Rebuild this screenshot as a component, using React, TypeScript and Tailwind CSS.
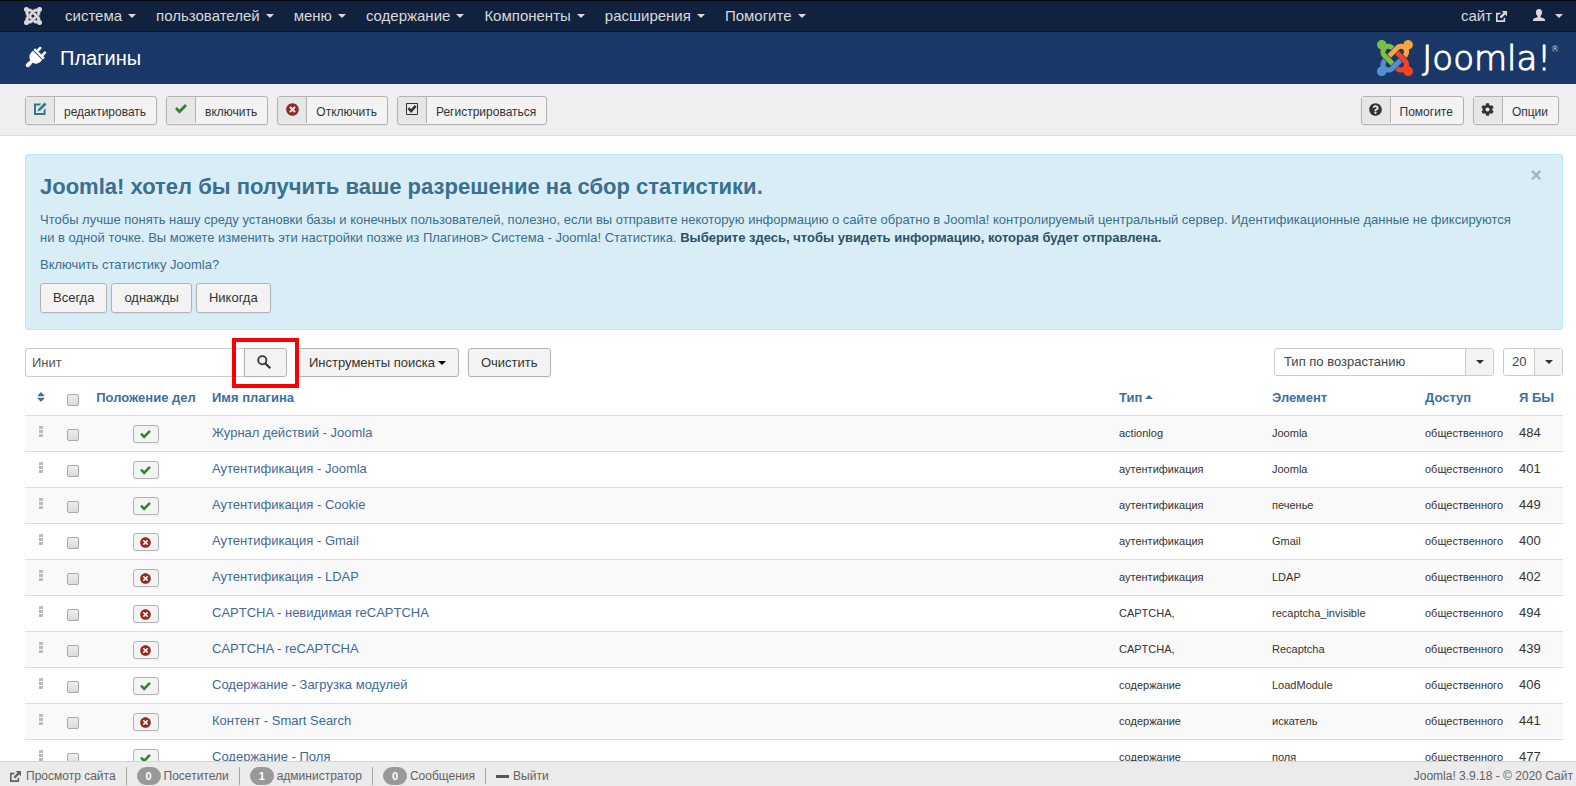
import { useState } from 'react';
import clsx from 'clsx';
import { ImJoomla } from 'react-icons/im';
import { FaCog, FaQuestionCircle, FaSort, FaTimesCircle } from 'react-icons/fa';

interface Plugin {
  id: number;
  name: string;
  type: string;
  element: string;
  enabled: boolean;
}

const menuItems = [
  'система',
  'пользователей',
  'меню',
  'содержание',
  'Компоненты',
  'расширения',
  'Помогите',
];

const plugins: Plugin[] = [
  { id: 484, name: 'Журнал действий - Joomla', type: 'actionlog', element: 'Joomla', enabled: true },
  { id: 401, name: 'Аутентификация - Joomla', type: 'аутентификация', element: 'Joomla', enabled: true },
  { id: 449, name: 'Аутентификация - Cookie', type: 'аутентификация', element: 'печенье', enabled: true },
  { id: 400, name: 'Аутентификация - Gmail', type: 'аутентификация', element: 'Gmail', enabled: false },
  { id: 402, name: 'Аутентификация - LDAP', type: 'аутентификация', element: 'LDAP', enabled: false },
  { id: 494, name: 'CAPTCHA - невидимая reCAPTCHA', type: 'CAPTCHA,', element: 'recaptcha_invisible', enabled: false },
  { id: 439, name: 'CAPTCHA - reCAPTCHA', type: 'CAPTCHA,', element: 'Recaptcha', enabled: false },
  { id: 406, name: 'Содержание - Загрузка модулей', type: 'содержание', element: 'LoadModule', enabled: true },
  { id: 441, name: 'Контент - Smart Search', type: 'содержание', element: 'искатель', enabled: false },
  { id: 477, name: 'Содержание - Поля', type: 'содержание', element: 'поля', enabled: true },
];

const btn =
  'rounded-[3px] border border-[#b3b3b3] bg-[#f3f3f3] text-[#333] shadow-[0_1px_2px_rgba(0,0,0,0.05)]';

const checkbox =
  'block size-3 appearance-none rounded-xs border border-[#a9a9a9] bg-linear-to-b from-[#ececec] to-[#dcdcdc] checked:from-[#3071a9] checked:to-[#3071a9]';

const Caret = ({ className }: { className?: string }) => (
  <span
    className={clsx('inline-block border-x-4 border-t-4 border-x-transparent border-t-current', className)}
  />
);

const CheckIcon = ({ className }: { className?: string }) => (
  <svg viewBox="0 0 12 10" className={clsx('text-[#378137]', className)} fill="currentColor">
    <path d="M0 5l1.9-1.9 2.6 2.5L10 0l2 1.9L4.5 9.8z" />
  </svg>
);

const EditIcon = () => (
  <svg viewBox="0 0 14 14" className="size-3.5 text-[#2f7487]" fill="currentColor">
    <path d="M1 1.5h7.4L6.6 3.4H3v7.6h7.6V8.2L12.5 6.3V13H1z" />
    <path d="M11.6.6L13.5 2.5 7.4 8.6l-2.9 1 1-2.9z" />
  </svg>
);

const CheckinIcon = () => (
  <svg viewBox="0 0 14 14" className="size-3.5" fill="none" stroke="currentColor">
    <path d="M1.5 1.5h11v11h-11z" />
    <path d="M3.4 6.2l2.7 2.9 4.6-5.2" strokeWidth="2.6" />
  </svg>
);

const ExternalIcon = () => (
  <svg viewBox="0 0 12 12" className="size-[11px]" fill="currentColor">
    <path d="M0 2h5.5L4 3.7H1.8v6.5h6.4V8.3l1.8-1.6V12H0z" />
    <path d="M6.2 0H12v5.8l-2-2-4.3 4.3-1.8-1.8L8.2 2z" />
  </svg>
);

const UserIcon = () => (
  <svg viewBox="0 0 12 12" className="mb-0.5 size-3" fill="currentColor">
    <path d="M6 0c2 0 3.1 1.3 3.1 3.3 0 1.6-.7 3-1.6 3.8v1.2c2.4.4 4.5 1.3 4.5 2.6V12H0v-1.1c0-1.3 2.1-2.2 4.5-2.6V7.1c-.9-.8-1.6-2.2-1.6-3.8C2.9 1.3 4 0 6 0z" />
  </svg>
);

const SearchIcon = () => (
  <svg viewBox="0 0 14 14" className="size-3.5" fill="none" stroke="currentColor">
    <circle cx="5.3" cy="5.3" r="4.1" strokeWidth="1.8" />
    <path d="M8.3 8.3l4.9 4.9" strokeWidth="2.2" />
  </svg>
);

const PlugIcon = () => (
  <svg viewBox="0 0 20 20" className="size-5 overflow-visible" fill="currentColor">
    <g transform="rotate(45 10 10)">
      <rect x="5.4" y="-2" width="2.6" height="6" rx="1.2" />
      <rect x="12" y="-2" width="2.6" height="6" rx="1.2" />
      <path d="M3.2 3h13.6v2.4H3.2zM3.4 6.3h13.2v2.2c0 3.4-2 5.7-4.9 6.5v5.6c0 2.2-3.4 2.2-3.4 0V15c-2.9-.8-4.9-3.1-4.9-6.5z" />
      <rect x="8" y="16.2" width="4" height="5.6" rx="1.4" />
    </g>
  </svg>
);

const JoomlaLogo = () => (
  <div className="flex items-center gap-[9px] text-white">
    <svg viewBox="0 32 448 448" className="size-9">
      <path
        fill="#7ac143"
        d="M.6 92.1C.6 58.8 27.4 32 60.4 32c30 0 54.5 21.9 59.2 50.2 32.6-7.6 67.1.6 96.5 30l-44.3 44.3c-20.5-20.5-42.6-16.3-55.4-3.5-14.3 14.3-14.3 37.9 0 52.2l99.5 99.5-44 44.3c-87.7-87.2-49.7-49.7-99.8-99.7-26.8-26.5-35-64.8-24.8-98.9C20.4 144.6.6 120.7.6 92.1z"
      />
      <path
        fill="#f9a541"
        d="M130.1 208.5l44.3 44.3c10-10 89.7-89.7 99.7-99.8 14.3-14.3 37.6-14.3 51.9 0 12.8 12.8 17 35-3.5 55.4l44 44.3c31.2-31.2 38.5-67.6 28.9-101.2 29.2-4.1 51.9-29.2 51.9-59.5 0-33.2-26.8-60.1-59.8-60.1-30.3 0-55.4 22.5-59.5 51.6-33.8-9.9-71.7-1.5-98.3 25.1-18.3 19.1-71.1 71.5-99.6 99.9z"
      />
      <path
        fill="#f44321"
        d="M396.4 360.7c8.2-32.7-.9-68.5-26.3-93.9-11.8-12.2 5 4.7-99.5-99.7l-44.3 44.3 99.7 99.7c14.3 14.3 14.3 37.6 0 51.9-12.8 12.8-35 17-55.4-3.5l-44 44.3c27.6 30.2 68 38.8 102.7 28 5.5 27.4 29.7 48.1 58.9 48.1 33 0 59.8-26.8 59.8-60.1 0-30.2-22.5-55-51.6-59.1z"
      />
      <path
        fill="#5091cd"
        d="M312.1 307.6l-44-44.3c-87 86.4-50.4 50.4-99.7 99.8-14.3 14.3-37.6 14.3-51.9 0-13.1-13.4-16.9-35.3 3.2-55.4l-44-44.3c-30.2 30.2-38 65.2-29.5 98.3-26.7 6-46.2 29.9-46.2 58.2C0 453.2 26.8 480 59.8 480c28.6 0 52.5-19.8 58.6-46.7 32.7 8.2 68.5-.6 94.2-26 32.1-32 12.2-12.4 99.5-99.7z"
      />
    </svg>
    <span className="flex items-start font-['DejaVu_Sans',sans-serif] text-[34px] leading-9 font-extralight">
      <span className="[-webkit-text-stroke:1px_white]">Joomla!</span>
      <span className="text-[8px] leading-5">®</span>
    </span>
  </div>
);

const ToolbarButton = ({ icon, label }: { icon: React.ReactNode; label: string }) => (
  <button type="button" className={clsx(btn, 'flex h-[29px] text-xs')}>
    <span className="flex h-[26px] w-[29px] items-center justify-center border-r border-[#b3b3b3] bg-[#e6e6e6] pb-0.5 text-[13px]">
      {icon}
    </span>
    <span className="pt-px pr-2.5 pl-[9px] leading-[29px]">{label}</span>
  </button>
);

const StatusLink = ({ count, label }: { count: number; label: string }) => (
  <a href="#" className="flex items-center gap-[3px] border-l border-[#a6a6a6] pl-2.5">
    <span className="w-6 rounded-full bg-[#999] text-center text-[11px] leading-[18px] font-bold text-white">
      {count}
    </span>
    {label}
  </a>
);

const App = () => {
  const [search, setSearch] = useState('');
  const [showStats, setShowStats] = useState(true);

  return (
    <div className="flex h-screen flex-col overflow-hidden bg-white font-['Liberation_Sans',Arial,sans-serif] text-[13px] leading-[18px] text-[#333]">
      {/* Top menu */}
      <nav className="flex h-8 shrink-0 items-center border-y border-t-[#02060f] border-b-[#0b1524] bg-[#10223e] pr-[13px] pl-6 text-[15px] text-[#d9d9d9]">
        <a href="#" aria-label="Joomla" className="mr-[23px] text-lg">
          <ImJoomla stroke="currentColor" strokeWidth="0.5" />
        </a>
        <ul className="flex grow gap-5">
          {menuItems.map((item) => (
            <li key={item}>
              <a href="#" className="flex items-center gap-1.5">
                {item}
                <Caret />
              </a>
            </li>
          ))}
        </ul>
        <a href="#" className="flex items-center gap-1">
          сайт
          <ExternalIcon />
        </a>
        <a href="#" aria-label="Профиль" className="ml-[26px] flex items-center gap-2.5">
          <UserIcon />
          <Caret />
        </a>
      </nav>

      <header className="flex h-[52px] shrink-0 items-center justify-between bg-[#1a3867] pr-[17px] pl-[25px]">
        <h1 className="flex items-center gap-[15px] text-xl text-white">
          <PlugIcon />
          Плагины
        </h1>
        <JoomlaLogo />
      </header>

      {/* Toolbar */}
      <div className="flex h-[52px] shrink-0 items-center gap-[9px] border-b border-[#ddd] bg-[#efefef] pt-0.5 pr-[17px] pl-[25px]">
        <ToolbarButton icon={<EditIcon />} label="редактировать" />
        <ToolbarButton icon={<CheckIcon className="h-2.5 w-3" />} label="включить" />
        <ToolbarButton icon={<FaTimesCircle className="text-[#942a25]" />} label="Отключить" />
        <ToolbarButton icon={<CheckinIcon />} label="Регистрироваться" />
        <div className="ml-auto flex gap-[9px]">
          <ToolbarButton icon={<FaQuestionCircle />} label="Помогите" />
          <ToolbarButton icon={<FaCog />} label="Опции" />
        </div>
      </div>

      <main className="min-h-0 grow overflow-hidden pt-[18px] pr-[13px] pl-[25px]">
        {showStats && (
          <section className="relative mb-[18px] rounded-[3px] border border-[#bce8f1] bg-[#d9edf7] pt-3.5 pr-12 pb-4 pl-3.5 text-[#3a6f8f]">
            <button
              type="button"
              aria-label="Закрыть"
              onClick={() => setShowStats(false)}
              className="absolute top-[11px] right-5 text-xl leading-[18px] font-bold text-[#a5b5bd]"
            >
              ×
            </button>
            <h2 className="mb-1.5 text-[22px] leading-9 font-bold">
              Joomla! хотел бы получить ваше разрешение на сбор статистики.
            </h2>
            <p className="mb-[9px]">
              Чтобы лучше понять нашу среду установки базы и конечных пользователей, полезно, если вы
              отправите некоторую информацию о сайте обратно в Joomla! контролируемый центральный
              сервер. Идентификационные данные не фиксируются ни в одной точке. Вы можете изменить эти
              настройки позже из Плагинов&gt; Система - Joomla! Статистика.{' '}
              <a href="#" className="font-bold text-[#2a5268]">
                Выберите здесь, чтобы увидеть информацию, которая будет отправлена.
              </a>
            </p>
            <p className="mb-[9px]">Включить статистику Joomla?</p>
            <div className="flex gap-1">
              {['Всегда', 'однажды', 'Никогда'].map((label) => (
                <button key={label} type="button" className={clsx(btn, 'h-[30px] px-3')}>
                  {label}
                </button>
              ))}
            </div>
          </section>
        )}

        {/* Search tools */}
        <div className="flex items-start">
          <input
            type="text"
            aria-label="Инит"
            placeholder="Инит"
            value={search}
            onChange={(e) => setSearch(e.target.value)}
            className="h-[29px] w-[219px] rounded-l-[3px] border border-r-0 border-[#ccc] px-1.5 placeholder:text-[#555]"
          />
          <div className="relative mr-2.5">
            <button
              type="button"
              aria-label="Искать"
              className={clsx(btn, 'flex h-[29px] w-[43px] items-center justify-center rounded-l-none pr-1 pb-0.5')}
            >
              <SearchIcon />
            </button>
            <span className="pointer-events-none absolute -inset-x-3 -top-2.5 -bottom-[11px] border-4 border-[#fa0000]" />
          </div>
          <button type="button" className={clsx(btn, 'mr-[9px] flex h-[29px] items-center gap-[3px] pr-3 pl-[11px]')}>
            Инструменты поиска
            <Caret className="text-black" />
          </button>
          <button type="button" className={clsx(btn, 'h-[29px] px-3')}>
            Очистить
          </button>
          <div className="ml-auto flex gap-[9px]">
            <div className="relative w-[220px]">
              <select
                aria-label="Сортировка"
                className="h-7 w-full appearance-none rounded-[3px] border border-[#ccc] bg-white pr-8 pl-[9px] text-[#444]"
              >
                <option>Тип по возрастанию</option>
              </select>
              <span className="pointer-events-none absolute inset-y-px right-px flex w-7 items-center justify-center border-l border-[#ccc] bg-[#f3f3f3]">
                <Caret />
              </span>
            </div>
            <div className="relative w-15">
              <select
                aria-label="Количество"
                className="h-7 w-full appearance-none rounded-[3px] border border-[#ccc] bg-white pr-7 pl-2 text-[#444]"
              >
                <option>20</option>
              </select>
              <span className="pointer-events-none absolute inset-y-px right-px flex w-7 items-center justify-center border-l border-[#ccc] bg-[#f3f3f3]">
                <Caret />
              </span>
            </div>
          </div>
        </div>

        {/* Plugin list */}
        <table className="w-full table-fixed text-left">
          <colgroup>
            <col className="w-[34px]" />
            <col className="w-[29px]" />
            <col className="w-[116px]" />
            <col />
            <col className="w-[153px]" />
            <col className="w-[153px]" />
            <col className="w-[94px]" />
            <col className="w-[52px]" />
          </colgroup>
          <thead>
            <tr className="h-[38px] text-[#3d6fa3]">
              <th className="pt-0.5 pr-[3px]">
                <a href="#" aria-label="Порядок" className="flex justify-center text-xs">
                  <FaSort />
                </a>
              </th>
              <th className="px-2 pt-2">
                <input type="checkbox" aria-label="Выбрать все" className={checkbox} />
              </th>
              <th className="px-2 pt-1 text-center whitespace-nowrap">
                <a href="#">Положение дел</a>
              </th>
              <th className="px-2 pt-1">
                <a href="#">Имя плагина</a>
              </th>
              <th className="px-2 pt-1">
                <a href="#" className="flex items-center gap-[3px]">
                  Тип
                  <Caret className="mb-0.5 rotate-180" />
                </a>
              </th>
              <th className="px-2 pt-1">
                <a href="#">Элемент</a>
              </th>
              <th className="px-2 pt-1">
                <a href="#">Доступ</a>
              </th>
              <th className="px-2 pt-1 whitespace-nowrap">
                <a href="#">Я БЫ</a>
              </th>
            </tr>
          </thead>
          <tbody>
            {plugins.map((plugin) => (
              <tr key={plugin.id} className="h-9 border-t border-[#ddd] odd:bg-[#f9f9f9]">
                <td className="pr-[3px]">
                  <div className="mb-1 flex flex-col items-center gap-px">
                    <span className="h-[3px] w-1 bg-[#bbb]" />
                    <span className="h-[3px] w-1 bg-[#bbb]" />
                    <span className="h-[3px] w-1 bg-[#bbb]" />
                  </div>
                </td>
                <td className="px-2 pt-1">
                  <input type="checkbox" aria-label={plugin.name} className={checkbox} />
                </td>
                <td className="pt-0.5">
                  <button
                    type="button"
                    aria-label={plugin.enabled ? 'Отключить' : 'Включить'}
                    className={clsx(btn, 'mx-auto flex h-[18px] w-[26px] items-center justify-center pr-0.5 text-[11px]')}
                  >
                    {plugin.enabled ? (
                      <CheckIcon className="h-[9px] w-[11px]" />
                    ) : (
                      <FaTimesCircle className="text-[#942a25]" />
                    )}
                  </button>
                </td>
                <td className="px-2 pb-px">
                  <a href="#" className="text-[#41699a]">
                    {plugin.name}
                  </a>
                </td>
                <td className="px-2 text-[11px]">{plugin.type}</td>
                <td className="px-2 text-[11px]">{plugin.element}</td>
                <td className="px-2 text-[11px] whitespace-nowrap">общественного</td>
                <td className="px-2 pb-px">{plugin.id}</td>
              </tr>
            ))}
          </tbody>
        </table>
      </main>

      {/* Status bar */}
      <footer className="flex h-[25px] shrink-0 items-center justify-between border-t border-[#d4d4d4] bg-[#ebebeb] pt-1 pr-[3px] pl-2.5 text-xs text-[#626262]">
        <div className="flex items-center gap-2.5">
          <a href="#" className="flex items-center gap-[5px]">
            <ExternalIcon />
            Просмотр сайта
          </a>
          <StatusLink count={0} label="Посетители" />
          <StatusLink count={1} label="администратор" />
          <StatusLink count={0} label="Сообщения" />
          <a href="#" className="flex items-center gap-1 border-l border-[#a6a6a6] pl-2.5">
            <span className="h-[3px] w-[13px] bg-[#555]" />
            Выйти
          </a>
        </div>
        <span>Joomla! 3.9.18 - © 2020 Сайт</span>
      </footer>
    </div>
  );
};

export default App;
